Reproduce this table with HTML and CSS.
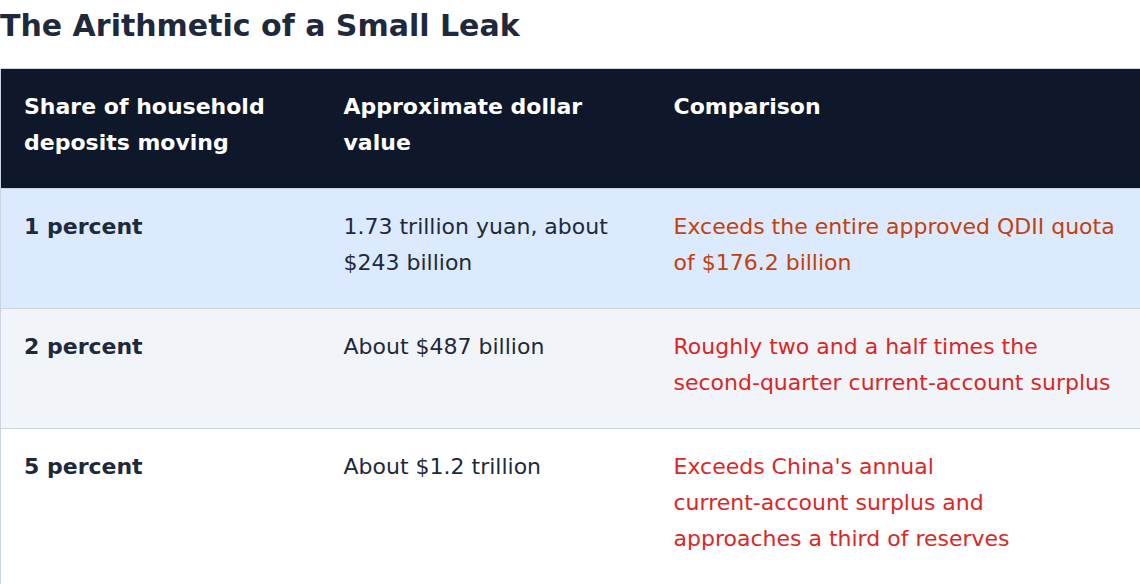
FILE: index.html
```html
<!DOCTYPE html>
<html>
<head>
<meta charset="utf-8">
<link rel="stylesheet" href="styles.css">
</head>
<body>
<h2 class="title">The Arithmetic of a Small Leak</h2>
<table class="leak">
  <colgroup>
    <col class="c1"><col class="c2"><col class="c3">
  </colgroup>
  <thead>
    <tr>
      <th>Share of household deposits moving</th>
      <th>Approximate dollar value</th>
      <th>Comparison</th>
    </tr>
  </thead>
  <tbody>
    <tr class="hl">
      <td class="share">1 percent</td>
      <td>1.73 trillion yuan, about $243 billion</td>
      <td class="cmp orange">Exceeds the entire approved QDII quota of $176.2 billion</td>
    </tr>
    <tr class="alt">
      <td class="share">2 percent</td>
      <td>About $487 billion</td>
      <td class="cmp red">Roughly two and a half times the <span class="nb">second-quarter</span> <span class="nb">current-account</span> surplus</td>
    </tr>
    <tr>
      <td class="share">5 percent</td>
      <td>About $1.2 trillion</td>
      <td class="cmp red">Exceeds China's annual <span class="nb">current-account</span> surplus and approaches a third of reserves</td>
    </tr>
  </tbody>
</table>
</body>
</html>
```

FILE: styles.css
```css
html, body {
  margin: 0;
  padding: 0;
  background: #ffffff;
}
body {
  font-family: "DejaVu Sans", sans-serif;
  color: #1e293b;
}
.title {
  margin: 0;
  padding: 8px 0 0 0;
  height: 60px;
  box-sizing: border-box;
  font-size: 30px;
  line-height: 36px;
  font-weight: bold;
  color: #1e293b;
}
.leak {
  width: 1140px;
  border-collapse: collapse;
  table-layout: fixed;
  border: 1px solid #cbd5e1;
  margin-top: 8px;
}
.c1 { width: 320px; }
.c2 { width: 330px; }
.c3 { width: 490px; }
.leak th, .leak td {
  text-align: left;
  vertical-align: top;
  padding: 20px 25px 27px 23px;
  font-size: 22px;
  line-height: 36px;
}
.leak th {
  background: #0f172a;
  color: #ffffff;
  font-weight: bold;
}
.leak tbody tr {
  border-top: 1px solid #cbd5e1;
}
.leak tr.hl td { background: #dbeafe; }
.leak tr.alt td { background: #f1f5f9; }
.share { font-weight: bold; }
.nb { white-space: nowrap; }
.orange { color: #c2410c; }
.red { color: #dc2626; }
```
